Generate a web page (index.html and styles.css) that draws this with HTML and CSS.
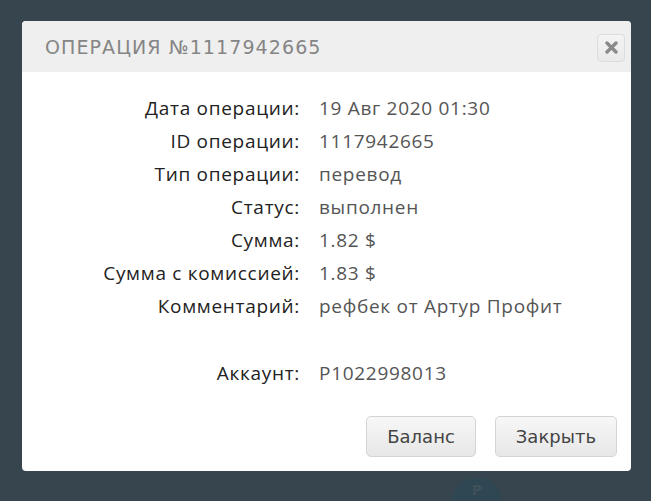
FILE: index.html
```html
<!DOCTYPE html>
<html lang="ru">
  <head>
    <meta charset="UTF-8" />
    <title>Операция №1117942665</title>
    <link rel="stylesheet" href="styles.css">
  </head>
  <body>
    <div class="backdrop-circle"><span>P</span></div>

    <div class="modal">
      <div class="modal-header">
        <h2>Операция №1117942665</h2>
        <button class="close-btn" type="button">
          <svg width="13" height="13" viewBox="0 0 13 13">
            <path d="M2 2 L11 11 M11 2 L2 11" stroke="#8a8a8a" stroke-width="3.4" stroke-linecap="round" />
          </svg>
        </button>
      </div>

      <div class="modal-body">
        <div class="details">
          <span class="label">Дата операции:</span>
          <span class="value">19 Авг 2020 01:30</span>

          <span class="label">ID операции:</span>
          <span class="value">1117942665</span>

          <span class="label">Тип операции:</span>
          <span class="value">перевод</span>

          <span class="label">Статус:</span>
          <span class="value">выполнен</span>

          <span class="label">Сумма:</span>
          <span class="value">1.82 $</span>

          <span class="label">Сумма с комиссией:</span>
          <span class="value">1.83 $</span>

          <span class="label">Комментарий:</span>
          <span class="value">рефбек от Артур Профит</span>

          <span class="label spacer"></span>
          <span class="value spacer"></span>

          <span class="label">Аккаунт:</span>
          <span class="value">P1022998013</span>
        </div>
      </div>

      <div class="modal-footer">
        <button type="button" class="btn">Баланс</button>
        <button type="button" class="btn">Закрыть</button>
      </div>
    </div>
  </body>
</html>
```

FILE: styles.css
```css
* {
  margin: 0;
  padding: 0;
  box-sizing: border-box;
}

body {
  background: #37464e;
  width: 651px;
  height: 501px;
  overflow: hidden;
  padding: 21px 0 0 22px;
  position: relative;
  font-family: "Open Sans", sans-serif;
}

.backdrop-circle {
  position: absolute;
  left: 452px;
  top: 478px;
  width: 50px;
  height: 23px;
  border-radius: 25px 25px 0 0;
  background: #2f4752;
  display: flex;
  justify-content: center;
  padding-top: 4px;
}

.backdrop-circle span {
  color: #3f525b;
  font: bold 14px/16px "DejaVu Sans", sans-serif;
}

.modal {
  position: relative;
  width: 609px;
  height: 450px;
  background: #ffffff;
  border-radius: 4px;
  overflow: hidden;
  display: flex;
  flex-direction: column;
}

.modal-header {
  height: 51px;
  background: #efefef;
  display: flex;
  align-items: center;
  justify-content: space-between;
  padding: 0 6px 0 23px;
}

.modal-header h2 {
  font-family: "DejaVu Sans", sans-serif;
  font-weight: normal;
  font-size: 19px;
  letter-spacing: 1.1px;
  text-transform: uppercase;
  color: #858585;
  padding-top: 1px;
}

.close-btn {
  width: 28px;
  height: 28px;
  border: 1px solid #dcdcdc;
  border-radius: 4px;
  background: linear-gradient(#f4f4f4, #e9e9e9);
  display: flex;
  align-items: center;
  justify-content: center;
  margin-top: 2px;
}

.modal-body {
  padding-top: 20px;
}

.details {
  display: grid;
  grid-template-columns: 278px 1fr;
  column-gap: 19px;
  font-size: 19px;
  letter-spacing: 0.7px;
  line-height: 33px;
}

.label {
  text-align: right;
  color: #222;
}

.value {
  color: #555;
}

.spacer {
  height: 34px;
}

.modal-footer {
  display: flex;
  justify-content: flex-end;
  gap: 19px;
  padding: 26px 14px 0 0;
}

.btn {
  height: 41px;
  padding: 0 20px;
  font-family: "DejaVu Sans", sans-serif;
  font-size: 18px;
  color: #444;
  border: 1px solid #d4d4d4;
  border-radius: 5px;
  background: linear-gradient(#f7f7f7, #e7e7e7);
}
```
